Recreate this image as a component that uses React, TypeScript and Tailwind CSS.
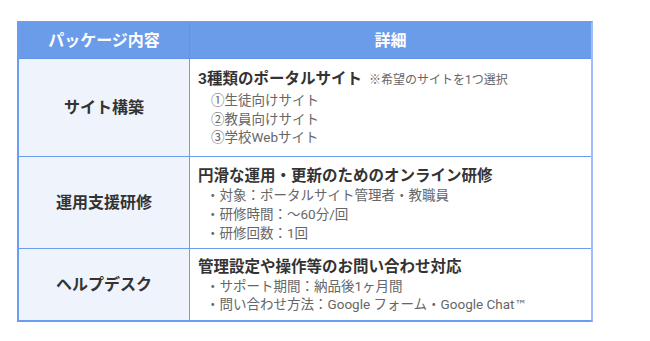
import React from "react";

const font = { fontFamily: 'Roboto, "Noto Sans CJK JP", "Noto Sans", sans-serif' };

function Row({
  label,
  title,
  note,
  items,
  h,
  pt,
  leading,
  last,
}: {
  label: string;
  title: string;
  note?: string;
  items: React.ReactNode[];
  h: string;
  pt: string;
  leading: string;
  last?: boolean;
}) {
  return (
    <div className={`flex ${h} ${last ? "" : "border-b border-[#6a9cf0]"}`}>
      <div className="w-[171px] shrink-0 bg-[#eef3fc] border-r border-[#6a9cf0] flex items-center justify-center text-[16px] font-bold text-[#333]">
        {label}
      </div>
      <div className={`flex-1 pl-[8px] ${pt}`}>
        <div className="text-[15.5px] font-bold text-[#333] leading-[20px]">
          {title}
          {note && (
            <span className="ml-[7px] text-[12px] font-normal text-[#666]">{note}</span>
          )}
        </div>
        <div className={`text-[13.5px] text-[#666] ${leading}`}>
          {items.map((t, i) => (
            <div key={i}>{t}</div>
          ))}
        </div>
      </div>
    </div>
  );
}

export default function App() {
  return (
    <div className="w-[650px] h-[341px] bg-white pt-[21px] pl-[17px]" style={font}>
      <div className="w-[576px] border-2 border-l-[#6a9cf0] border-t-[#6a9cf0] border-b-[#6a9cf0] border-r-[#9dbff7]">
        <div className="flex h-[36px] bg-[#6b9ce9] border-b border-[#5f93ea] text-white text-[16px] font-bold">
          <div className="w-[171px] shrink-0 border-r border-[#5f93ea] flex items-center justify-center">
            パッケージ内容
          </div>
          <div className="flex-1 flex items-center justify-center">詳細</div>
        </div>
        <Row
          label="サイト構築"
          title="3種類のポータルサイト"
          note="※希望のサイトを1つ選択"
          items={["①生徒向けサイト", "②教員向けサイト", "③学校Webサイト"]}
          h="h-[98px]"
          pt="pt-[10px]"
          leading="leading-[18.5px] pl-[13px] pt-[1px]"
        />
        <Row
          label="運用支援研修"
          title="円滑な運用・更新のためのオンライン研修"
          items={["・対象：ポータルサイト管理者・教職員", "・研修時間：～60分/回", "・研修回数：1回"]}
          h="h-[92px]"
          pt="pt-[9px]"
          leading="leading-[19px] pl-[8px]"
        />
        <Row
          label="ヘルプデスク"
          title="管理設定や操作等のお問い合わせ対応"
          items={[
            "・サポート期間：納品後1ヶ月間",
            <>
              ・問い合わせ方法：Google フォーム・Google Chat
              <span className="text-[12px]" style={{ fontFamily: '"DejaVu Sans", sans-serif' }}>™</span>
            </>,
          ]}
          h="h-[71px]"
          pt="pt-[8px]"
          leading="leading-[18px] pl-[8px]"
          last
        />
      </div>
    </div>
  );
}
